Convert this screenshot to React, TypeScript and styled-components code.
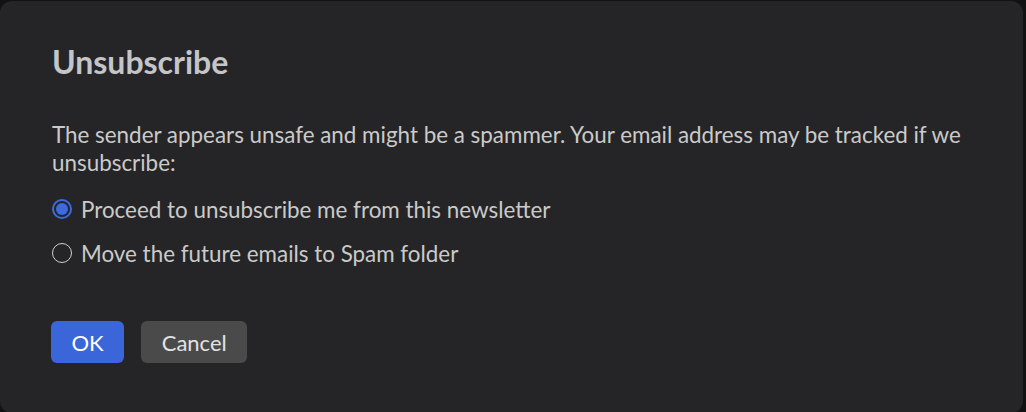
import React, { useState } from 'react'
import styled, { createGlobalStyle } from 'styled-components'

const GlobalStyle = createGlobalStyle`
  html, body {
    margin: 0;
    padding: 0;
    background: #121213;
    overflow: hidden;
  }
  body {
    font-family: Lato, "Noto Sans", sans-serif;
  }
`

const Backdrop = styled.div`
  width: 1026px;
  height: 412px;
  padding-top: 1px;
  box-sizing: border-box;
`

const Dialog = styled.div`
  width: 1023px;
  height: 412px;
  box-sizing: border-box;
  background: #252527;
  border-radius: 12px;
  padding: 41px 52px 0;
  display: flex;
  flex-direction: column;
`

const Title = styled.h1`
  margin: 0;
  font-size: 32px;
  font-weight: 700;
  line-height: 40px;
  color: #c4c5c9;
`

const Message = styled.p`
  margin: 39px 0 0;
  font-size: 22.4px;
  line-height: 28px;
  color: #cacaca;
`

const Options = styled.div`
  display: flex;
  flex-direction: column;
  gap: 16px;
  margin-top: 18px;
`

const Option = styled.label`
  display: flex;
  align-items: center;
  gap: 9px;
  height: 28px;
  font-size: 22.4px;
  color: #cacaca;
  cursor: pointer;
`

const Radio = styled.span<{ $checked: boolean }>`
  width: 20px;
  height: 20px;
  box-sizing: border-box;
  border-radius: 50%;
  border: ${(p) => (p.$checked ? '2px solid #3d6ae0' : '1.5px solid #d0d0d0')};
  display: flex;
  align-items: center;
  justify-content: center;
  flex-shrink: 0;

  &::after {
    content: '';
    width: 12px;
    height: 12px;
    border-radius: 50%;
    background: #3d6ae0;
    display: ${(p) => (p.$checked ? 'block' : 'none')};
  }
`

const Actions = styled.div`
  display: flex;
  gap: 17px;
  margin: 54px 0 0 -1px;
`

const Button = styled.button<{ $primary?: boolean }>`
  height: 42px;
  padding: 0 20.5px;
  border: none;
  border-radius: 6px;
  font-family: Lato, "Noto Sans", sans-serif;
  font-size: 22px;
  color: ${(p) => (p.$primary ? '#ffffff' : '#e2e2e2')};
  background: ${(p) => (p.$primary ? '#3a66da' : '#4a4a4b')};
  cursor: pointer;
`

const options = [
  'Proceed to unsubscribe me from this newsletter',
  'Move the future emails to Spam folder',
]

export default function App() {
  const [choice, setChoice] = useState(0)

  return (
    <>
      <GlobalStyle />
      <Backdrop>
        <Dialog>
          <Title>Unsubscribe</Title>
          <Message>
            The sender appears unsafe and might be a spammer. Your email address
            may be tracked if we unsubscribe:
          </Message>
          <Options>
            {options.map((text, i) => (
              <Option key={text} onClick={() => setChoice(i)}>
                <Radio $checked={choice === i} />
                {text}
              </Option>
            ))}
          </Options>
          <Actions>
            <Button $primary>OK</Button>
            <Button>Cancel</Button>
          </Actions>
        </Dialog>
      </Backdrop>
    </>
  )
}
